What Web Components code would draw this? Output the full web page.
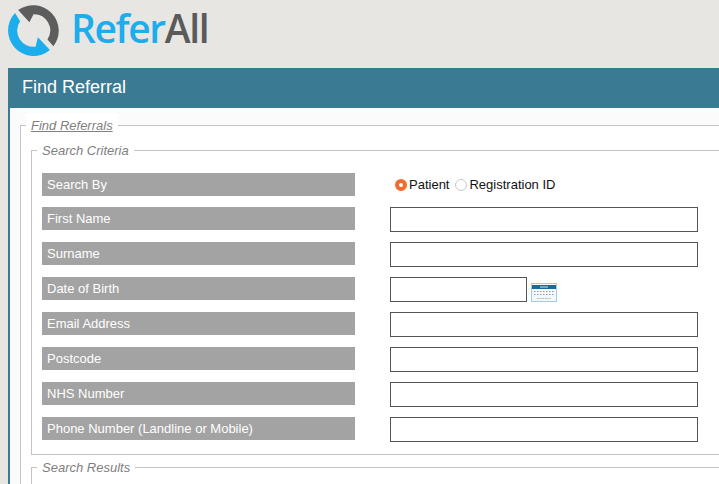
<!DOCTYPE html>
<html>
<head>
<meta charset="utf-8">
<style>
  html, body { margin: 0; height: 484px; overflow: hidden; background: #e8e6e2; }
</style>
</head>
<body>
<refer-app></refer-app>

<template id="logo-tpl">
  <style>
    :host { display: flex; align-items: flex-start; height: 68px; padding: 5px 0 0 8px; box-sizing: border-box; }
    svg { display: block; flex: none; }
    .word { margin: 0 0 0 12px; font: 600 39px/46px "Open Sans", sans-serif; letter-spacing: -1.4px; color: #1badec; }
    .word b { font-weight: 600; color: #5a5a5a; }
  </style>
  <svg width="51" height="51" viewBox="0 0 50 50">
    <path fill="#5d5d5d" d="M10 5 A25 25 0 0 1 44.500 40.500 L38.700 33.800 A16 16 0 0 0 25 9 L21 17 Z"/>
    <path fill="#1badec" d="M6.900 7.740 L11.840 15.900 A16 16 0 0 0 27.050 40.870 L29.300 31.500 L41.100 44.100 A25 25 0 0 1 6.900 7.740 Z"/>
  </svg>
  <span class="word">Refer<b>All</b></span>
</template>

<template id="panel-tpl">
  <style>
    :host { display: block; margin-left: 8px; border-left: 2px solid #3a7b93; background: #fbfbfb; height: 416px; overflow: hidden; }
    h1 { margin: 0 0 0 -2px; height: 40px; padding-left: 14px; background: #3a7b93; color: #fff; font: 400 18px/38px "Liberation Sans", sans-serif; }
    .body { padding: 5px 0 0 10px; }
  </style>
  <h1><slot name="title"></slot></h1>
  <div class="body"><slot></slot></div>
</template>

<template id="group-tpl">
  <style>
    :host { display: block; font: italic 13px "Liberation Sans", sans-serif; color: #808080; }
    fieldset { margin: 0; padding: var(--pad, 0 0 0 10px); border: 1px solid #c4c4c4; border-right: 0; min-width: 0; background: #fff; }
    legend { margin-left: -5px; padding: var(--legend-pad, 0 5px); line-height: 15px; background: #fff; }
    :host([underlined]) legend { text-decoration: underline; }
  </style>
  <fieldset>
    <legend><slot name="legend"></slot></legend>
    <slot></slot>
  </fieldset>
</template>

<template id="row-tpl">
  <style>
    :host { display: grid; grid-template-columns: 313px 308px; column-gap: 35px; align-items: start; height: 35px; font: normal 13px "Liberation Sans", sans-serif; }
    .label { height: 23px; padding-left: 5px; background: #a3a3a3; color: #fff; line-height: 23px; }
    .field { display: flex; align-items: flex-start; }
  </style>
  <div class="label"><slot name="label"></slot></div>
  <div class="field"><slot></slot></div>
</template>

<template id="input-tpl">
  <style>
    :host { display: block; width: var(--w, 308px); }
    input { display: block; box-sizing: border-box; width: 100%; height: 25px; margin: 0; padding: 0 4px; border: 1px solid #555; border-radius: 0; background: #fff; outline: 0; }
  </style>
  <input type="text">
</template>

<template id="radio-tpl">
  <style>
    :host { display: inline-flex; align-items: center; font: normal 13px "Liberation Sans", sans-serif; color: #111; }
    i { width: 12px; height: 12px; box-sizing: border-box; margin-right: 2px; border-radius: 50%; border: 1px solid #c8c8c8; background: #fff; }
    :host([checked]) i { border: 4px solid #f26b2a; }
  </style>
  <i></i><slot></slot>
</template>

<template id="calendar-tpl">
  <style>
    :host { display: block; margin: 6px 0 0 4px; width: 26px; height: 19px; }
    svg { display: block; }
  </style>
  <svg width="26" height="19" viewBox="0 0 26 19">
    <rect x=".5" y=".5" width="25" height="18" fill="#f4f8fa" stroke="#a5cde0"/>
    <rect x="1" y="2" width="24" height="4" fill="#1c6a9c"/>
    <path d="M9 4h8" stroke="#cfe2ee" stroke-width="1"/>
    <path d="M3 8.500h20M3 11.500h20" stroke="#8d9ca6" stroke-width="1" stroke-dasharray="1.500 1.500"/>
    <path d="M6 15.500h14" stroke="#b4bcc1" stroke-width="1" stroke-dasharray="2 .6"/>
  </svg>
</template>

<script>
  function fromTemplate(el, id) {
    el.attachShadow({ mode: "open" });
    el.shadowRoot.appendChild(document.getElementById(id).content.cloneNode(true));
  }

  class ReferLogo extends HTMLElement {
    constructor() { super(); fromTemplate(this, "logo-tpl"); }
  }
  class ReferPanel extends HTMLElement {
    constructor() { super(); fromTemplate(this, "panel-tpl"); }
  }
  class ReferGroup extends HTMLElement {
    constructor() { super(); fromTemplate(this, "group-tpl"); }
  }
  class ReferRow extends HTMLElement {
    constructor() { super(); fromTemplate(this, "row-tpl"); }
  }
  class ReferInput extends HTMLElement {
    constructor() { super(); fromTemplate(this, "input-tpl"); }
  }
  class ReferRadio extends HTMLElement {
    constructor() { super(); fromTemplate(this, "radio-tpl"); }
  }
  class ReferCalendar extends HTMLElement {
    constructor() { super(); fromTemplate(this, "calendar-tpl"); }
  }

  class ReferApp extends HTMLElement {
    constructor() {
      super();
      this.attachShadow({ mode: "open" });
      const fields = ["First Name", "Surname", "Date of Birth", "Email Address", "Postcode", "NHS Number", "Phone Number (Landline or Mobile)"];
      const rows = fields.map((name) => {
        const control = name === "Date of Birth"
          ? `<refer-input style="--w:137px"></refer-input><refer-calendar></refer-calendar>`
          : `<refer-input></refer-input>`;
        return `<refer-row><span slot="label">${name}</span>${control}</refer-row>`;
      }).join("");

      this.shadowRoot.innerHTML = `
        <style>
          :host { display: block; }
          .radios { display: flex; gap: 6px; padding: 4px 0 0 5px; }
          .first { height: 34px; }
          .criteria-wrap { padding-top: 5px; margin-bottom: 5px; }
        </style>
        <refer-logo></refer-logo>
        <refer-panel>
          <span slot="title">Find Referral</span>
          <refer-group underlined style="--pad: 0 0 0 10px; --legend-pad: 5px">
            <span slot="legend">Find Referrals</span>
            <div class="criteria-wrap">
              <refer-group style="--pad: 15px 0 2px 10px; --legend-pad: 0 5px">
                <span slot="legend">Search Criteria</span>
                <refer-row class="first">
                  <span slot="label">Search By</span>
                  <div class="radios">
                    <refer-radio checked>Patient</refer-radio>
                    <refer-radio>Registration ID</refer-radio>
                  </div>
                </refer-row>
                ${rows}
              </refer-group>
            </div>
            <refer-group style="--pad: 0 0 40px 10px; --legend-pad: 0 5px">
              <span slot="legend">Search Results</span>
            </refer-group>
          </refer-group>
        </refer-panel>
      `;
    }
  }

  customElements.define("refer-logo", ReferLogo);
  customElements.define("refer-panel", ReferPanel);
  customElements.define("refer-group", ReferGroup);
  customElements.define("refer-row", ReferRow);
  customElements.define("refer-input", ReferInput);
  customElements.define("refer-radio", ReferRadio);
  customElements.define("refer-calendar", ReferCalendar);
  customElements.define("refer-app", ReferApp);
</script>
</body>
</html>
